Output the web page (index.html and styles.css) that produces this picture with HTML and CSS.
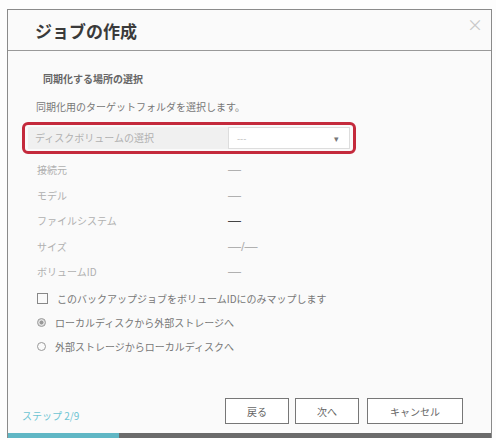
FILE: index.html
```html
<!DOCTYPE html>
<html lang="ja">
<head>
    <meta charset="UTF-8">
    <title>ジョブの作成</title>
    <link rel="stylesheet" href="styles.css">
</head>
<body>
    <div class="dialog">
        <div class="dialog-header">
            <h1>ジョブの作成</h1>
            <span class="close">×</span>
        </div>
        <div class="dialog-body">
            <h2>同期化する場所の選択</h2>
            <p class="intro">同期化用のターゲットフォルダを選択します。</p>
            <div class="highlight">
                <div class="select-row">
                    <div class="select-label">ディスクボリュームの選択</div>
                    <div class="select-box">
                        <span>---</span>
                        <span class="caret">▾</span>
                    </div>
                </div>
            </div>
            <div class="info">
                <div class="info-row"><span class="key">接続元</span><span class="val">—</span></div>
                <div class="info-row"><span class="key">モデル</span><span class="val">—</span></div>
                <div class="info-row"><span class="key">ファイルシステム</span><span class="val dark">—</span></div>
                <div class="info-row"><span class="key">サイズ</span><span class="val">—/—</span></div>
                <div class="info-row"><span class="key">ボリュームID</span><span class="val">—</span></div>
            </div>
            <div class="options">
                <label class="option"><span class="check"></span>このバックアップジョブをボリュームIDにのみマップします</label>
                <label class="option"><span class="radio on"></span>ローカルディスクから外部ストレージへ</label>
                <label class="option"><span class="radio"></span>外部ストレージからローカルディスクへ</label>
            </div>
        </div>
        <div class="dialog-footer">
            <span class="step">ステップ 2/9</span>
            <div class="buttons">
                <button class="btn">戻る</button>
                <button class="btn">次へ</button>
                <button class="btn wide">キャンセル</button>
            </div>
        </div>
        <div class="progress"><div class="progress-fill" style="width: 23%"></div></div>
    </div>
</body>
</html>
```
FILE: styles.css
```css
body {
    margin: 0;
    padding: 9px 0 0 7px;
    background-color: #fdfdfd;
    font-family: "Noto Sans CJK JP", "Liberation Sans", sans-serif;
    color: #555;
}
.dialog {
    width: 483px;
    height: 428px;
    border: 1px solid #8a8a8a;
    border-bottom: none;
    background-color: #fafafa;
    display: flex;
    flex-direction: column;
}
.dialog-header {
    height: 40px;
    border-bottom: 1px solid #999;
    display: flex;
    align-items: center;
    justify-content: space-between;
    padding: 0 8px 0 27px;
}
h1 {
    margin: 0;
    font-size: 17px;
    font-weight: bold;
    color: #3a3a3a;
}
.close {
    align-self: flex-start;
    margin-top: 2px;
    font-size: 16px;
    color: #c8c8c8;
}
.dialog-body {
    flex: 1;
    padding: 21px 0 0 14px;
}
h2 {
    margin: 0 0 0 21px;
    font-size: 10px;
    font-weight: bold;
    color: #666;
    line-height: 14px;
}
.intro {
    margin: 14px 0 8px 14px;
    font-size: 10px;
    color: #777;
    line-height: 14px;
}
.highlight {
    width: 322px;
    border: 3px solid #c42a3c;
    border-radius: 6px;
    padding: 2px 3px;
}
.select-row {
    display: flex;
    height: 22px;
}
.select-label {
    width: 193px;
    background-color: #f0f0f0;
    font-size: 10px;
    color: #b0b0b0;
    line-height: 22px;
    padding-left: 7px;
}
.select-box {
    flex: 1;
    border: 1px solid #ddd;
    background-color: #fff;
    display: flex;
    justify-content: space-between;
    align-items: center;
    padding: 0 10px 0 8px;
    font-size: 9px;
    color: #bbb;
}
.caret {
    color: #777;
    font-size: 9px;
}
.info {
    padding: 3px 0 0 15px;
}
.info-row {
    display: flex;
    height: 25.5px;
    align-items: center;
    font-size: 10px;
}
.key {
    width: 191px;
    color: #b0b0b0;
}
.val {
    color: #b0b0b0;
    font-size: 13px;
    font-family: "Liberation Sans", sans-serif;
}
.val.dark {
    color: #444;
}
.options {
    padding: 2px 0 0 15px;
}
.option {
    display: flex;
    align-items: center;
    height: 24px;
    font-size: 10px;
    color: #777;
}
.check {
    width: 9px;
    height: 9px;
    border: 1px solid #888;
    margin-right: 9px;
}
.radio {
    width: 9px;
    height: 9px;
    border: 1px solid #999;
    border-radius: 50%;
    margin-right: 9px;
    box-sizing: border-box;
}
.radio.on {
    background: radial-gradient(circle, #999 35%, #ddd 45%);
}
.dialog-footer {
    display: flex;
    justify-content: space-between;
    align-items: flex-end;
    padding: 0 28px 9px 14px;
}
.step {
    font-size: 10px;
    color: #6cc4d2;
    margin-bottom: 1px;
}
.buttons {
    display: flex;
    gap: 6px;
}
.btn {
    height: 26px;
    width: 64px;
    border: 1px solid #777;
    background-color: #fff;
    font-family: inherit;
    font-size: 10px;
    color: #666;
    padding: 0;
}
.btn.wide {
    width: 96px;
    margin-left: 2px;
}
.progress {
    height: 5px;
    background-color: #6a6a6a;
}
.progress-fill {
    height: 100%;
    background-color: #5fb6c4;
}
```
